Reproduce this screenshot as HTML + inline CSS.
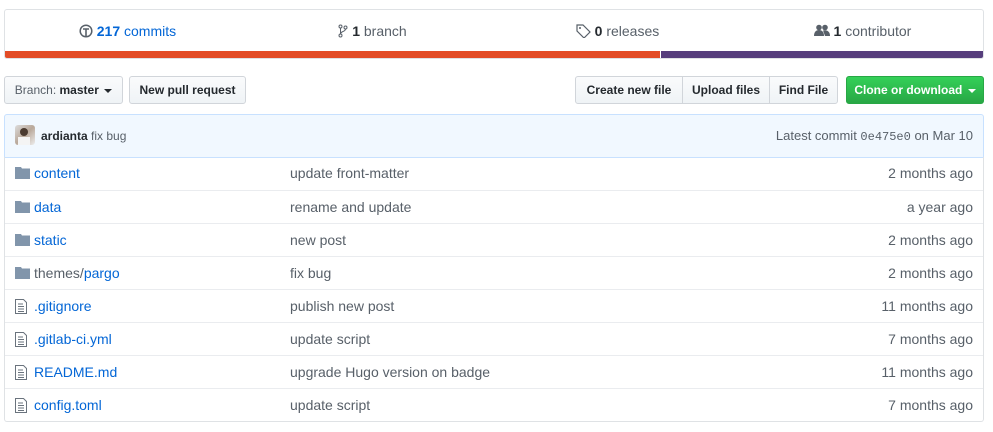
<!DOCTYPE html>
<html><head><meta charset="utf-8"><style>
*{box-sizing:border-box;margin:0;padding:0}
body{width:993px;height:432px;background:#fff;font-family:"Liberation Sans",Arial,sans-serif;font-size:14px;color:#24292e;position:relative;overflow:hidden}
.abs{position:absolute}
.stats{left:4px;top:9px;width:980px;height:50px;border:1px solid #dfe2e5;border-radius:3px;overflow:hidden}
.stat{position:absolute;top:0;height:42px;line-height:42px;text-align:center;color:#586069;font-size:14px}
.stat b{color:#24292e}
.bar{position:absolute;top:41px;height:8px}
.btn{position:absolute;top:76px;height:28px;border:1px solid #d1d5da;background:linear-gradient(#fafbfc,#eff3f6);font-size:12px;font-weight:bold;line-height:26px;text-align:center;color:#24292e;border-radius:3px}
.caret{display:inline-block;width:0;height:0;border-left:4px solid transparent;border-right:4px solid transparent;border-top:4px solid currentColor;vertical-align:middle;margin-left:2px}
.commit{left:4px;top:114px;width:980px;height:44px;background:#f1f8ff;border:1px solid #c8e1ff;border-radius:3px 3px 0 0;font-size:12px;line-height:42px}
.files{left:4px;top:157px;width:980px;height:265px;border:1px solid #dfe2e5;border-top:none;border-radius:0 0 3px 3px}
.row{position:absolute;left:0;width:978px;height:33px;border-top:1px solid #eaecef;line-height:33px;font-size:14px}
.row:first-child{border-top:none}
.nm{position:absolute;left:29px;color:#0366d6}
.msg{position:absolute;left:285px;color:#586069}
.age{position:absolute;right:10px;color:#586069}
.ic{position:absolute;left:10px;top:9px}
</style></head><body>
<div class="abs stats">
 <div class="stat" style="left:0;width:245px"><svg width="14" height="14" viewBox="0 0 14 14" style="vertical-align:-2px"><circle cx="7" cy="7" r="5.8" fill="none" stroke="#586069" stroke-width="1.5"/><path d="M4 5h6M7 5v7" stroke="#586069" stroke-width="1.6" fill="none"/></svg> <b style="color:#0366d6">217</b> <span style="color:#0366d6">commits</span></div>
 <div class="stat" style="left:245px;width:245px"><svg width="10" height="14" viewBox="0 0 10 14" style="vertical-align:-2px"><circle cx="2.5" cy="2.5" r="1.5" fill="none" stroke="#586069"/><circle cx="2.5" cy="11.5" r="1.5" fill="none" stroke="#586069"/><circle cx="7.5" cy="3.5" r="1.5" fill="none" stroke="#586069"/><path d="M2.5 4v6M7.5 5c0 3-5 2-5 5" stroke="#586069" fill="none"/></svg> <b>1</b> branch</div>
 <div class="stat" style="left:490px;width:245px"><svg width="15" height="14" viewBox="0 0 15 14" style="vertical-align:-2px"><path d="M1 1h6l7 7-6 6-7-7z" fill="none" stroke="#586069" stroke-width="1.2"/><circle cx="4" cy="4" r="1" fill="#586069"/></svg> <b>0</b> releases</div>
 <div class="stat" style="left:735px;width:245px"><svg width="16" height="13" viewBox="0 0 16 13" style="vertical-align:-1px"><circle cx="5" cy="3.5" r="2.8" fill="#586069"/><path d="M0 12c0-4 2-6 5-6s5 2 5 6z" fill="#586069"/><circle cx="11" cy="3.5" r="2.8" fill="#586069"/><path d="M9 6.5c4-1 7 1 7 5.5h-5z" fill="#586069"/></svg> <b>1</b> contributor</div>
 <div class="bar" style="left:0;width:655px;background:#e34c26"></div>
 <div class="bar" style="left:656px;width:324px;background:#563d7c"></div>
</div>
<div class="btn" style="left:4px;width:119px;font-weight:normal;color:#586069">Branch: <b style="color:#24292e">master</b> <span class="caret" style="color:#24292e"></span></div>
<div class="btn" style="left:129px;width:117px">New pull request</div>
<div class="btn" style="left:575px;width:108px;border-radius:3px 0 0 3px">Create new file</div>
<div class="btn" style="left:682px;width:88px;border-radius:0">Upload files</div>
<div class="btn" style="left:769px;width:69px;border-radius:0 3px 3px 0">Find File</div>
<div class="btn" style="left:846px;width:138px;background:linear-gradient(#34d058,#28a745);border-color:#28a745;color:#fff">Clone or download <span class="caret"></span></div>
<div class="abs commit">
 <div class="abs" style="left:10px;top:10px;width:20px;height:20px;border-radius:3px;background:linear-gradient(135deg,#ddd,#b9a89a 50%,#eee);overflow:hidden"><div style="position:absolute;left:5px;top:3px;width:8px;height:8px;border-radius:50%;background:#4a3a30"></div><div style="position:absolute;left:3px;top:12px;width:12px;height:8px;background:#f4f4f4"></div></div>
 <span class="abs" style="left:36px"><b>ardianta</b> <span style="color:#586069">fix bug</span></span>
 <span class="abs" style="right:10px;color:#586069;font-size:13px">Latest commit <span style="font-family:'Liberation Mono',monospace;font-size:12px">0e475e0</span> on Mar 10</span>
</div>
<div class="abs files">
<div class="row" style="top:0"><svg class="ic" width="15" height="13" viewBox="0 0 15 13"><path d="M0 1h6l1 1.5h8V13H0z" fill="#8195ab"/></svg><span class="nm">content</span><span class="msg">update front-matter</span><span class="age">2 months ago</span></div>
<div class="row" style="top:33px"><svg class="ic" width="15" height="13" viewBox="0 0 15 13"><path d="M0 1h6l1 1.5h8V13H0z" fill="#8195ab"/></svg><span class="nm">data</span><span class="msg">rename and update</span><span class="age">a year ago</span></div>
<div class="row" style="top:66px"><svg class="ic" width="15" height="13" viewBox="0 0 15 13"><path d="M0 1h6l1 1.5h8V13H0z" fill="#8195ab"/></svg><span class="nm">static</span><span class="msg">new post</span><span class="age">2 months ago</span></div>
<div class="row" style="top:99px"><svg class="ic" width="15" height="13" viewBox="0 0 15 13"><path d="M0 1h6l1 1.5h8V13H0z" fill="#8195ab"/></svg><span class="nm"><span style="color:#586069">themes/</span>pargo</span><span class="msg">fix bug</span><span class="age">2 months ago</span></div>
<div class="row" style="top:132px"><svg class="ic" width="12" height="15" viewBox="0 0 12 15"><path d="M.5.5h8l3 3v11H.5z" fill="none" stroke="#6a737d"/><path d="M3 5h5M3 7.5h6M3 10h6M3 12.5h6" stroke="#6a737d"/></svg><span class="nm">.gitignore</span><span class="msg">publish new post</span><span class="age">11 months ago</span></div>
<div class="row" style="top:165px"><svg class="ic" width="12" height="15" viewBox="0 0 12 15"><path d="M.5.5h8l3 3v11H.5z" fill="none" stroke="#6a737d"/><path d="M3 5h5M3 7.5h6M3 10h6M3 12.5h6" stroke="#6a737d"/></svg><span class="nm">.gitlab-ci.yml</span><span class="msg">update script</span><span class="age">7 months ago</span></div>
<div class="row" style="top:198px"><svg class="ic" width="12" height="15" viewBox="0 0 12 15"><path d="M.5.5h8l3 3v11H.5z" fill="none" stroke="#6a737d"/><path d="M3 5h5M3 7.5h6M3 10h6M3 12.5h6" stroke="#6a737d"/></svg><span class="nm">README.md</span><span class="msg">upgrade Hugo version on badge</span><span class="age">11 months ago</span></div>
<div class="row" style="top:231px"><svg class="ic" width="12" height="15" viewBox="0 0 12 15"><path d="M.5.5h8l3 3v11H.5z" fill="none" stroke="#6a737d"/><path d="M3 5h5M3 7.5h6M3 10h6M3 12.5h6" stroke="#6a737d"/></svg><span class="nm">config.toml</span><span class="msg">update script</span><span class="age">7 months ago</span></div>
</div>
</body></html>
